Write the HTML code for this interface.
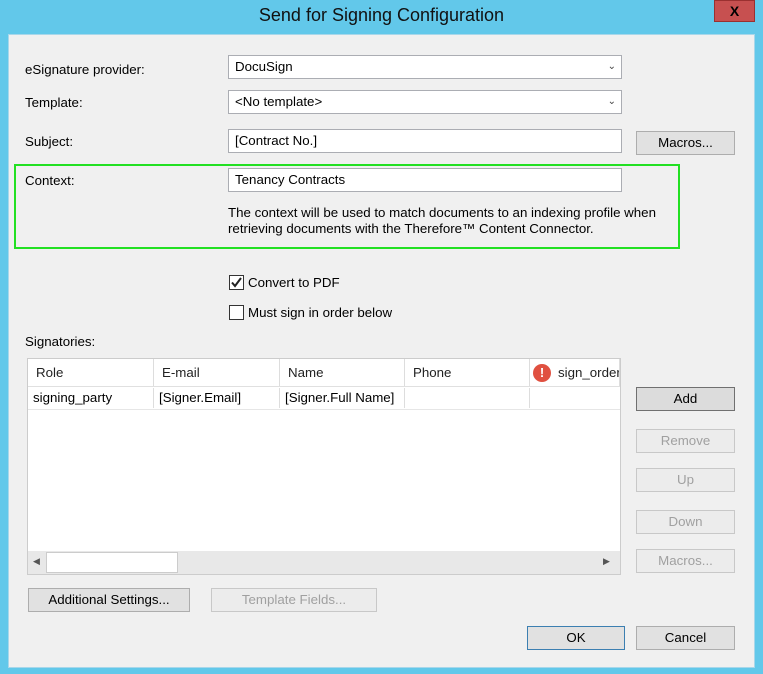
<!DOCTYPE html>
<html><head><style>
*{box-sizing:border-box;margin:0;padding:0}
body{width:763px;height:674px;background:#62c8ea;font-family:"Liberation Sans",sans-serif;font-size:13.3px;color:#000;position:relative;overflow:hidden}
.a{position:absolute}
.client{left:8px;top:34px;width:747px;height:634px;background:#f0f0f0;border:1px solid #a8d7ea}
.box{background:#fff;border:1px solid #abadb3;padding:0 6px;line-height:22px;height:24px}
.btn{background:#e1e1e1;border:1px solid #adadad;text-align:center;line-height:22px;height:24px}
.dis{color:#a0a0a0;background:#ececec;border-color:#c8c8c8}
.chk{width:15px;height:15px;border:1px solid #333;background:#fff}
.dd{position:absolute;right:5px;top:0;font-size:10px;color:#444}
.th{position:absolute;top:0;height:27px;line-height:27px;padding-left:8px;border-right:1px solid #ddd;color:#222;background:#fff;white-space:nowrap;overflow:hidden}
.td{position:absolute;top:29px;height:20px;line-height:20px;padding-left:5px;border-right:1px solid #ddd;white-space:nowrap}
</style></head><body>
<div class="a" style="left:0;top:5px;width:763px;text-align:center;font-size:18px;color:#111">Send for Signing Configuration</div>
<div class="a" style="left:714px;top:0;width:41px;height:22px;background:#c75050;border:1px solid #9a3030;color:#000;font-weight:bold;text-align:center;line-height:20px;font-size:14px">X</div>
<div class="a client"></div>

<div class="a" style="left:25px;top:62px">eSignature provider:</div>
<div class="a box" style="left:228px;top:55px;width:394px">DocuSign<span class="dd">&#8964;</span></div>
<div class="a" style="left:25px;top:95px">Template:</div>
<div class="a box" style="left:228px;top:90px;width:394px">&lt;No template&gt;<span class="dd">&#8964;</span></div>
<div class="a" style="left:25px;top:134px">Subject:</div>
<div class="a box" style="left:228px;top:129px;width:394px">[Contract No.]</div>
<div class="a btn" style="left:636px;top:131px;width:99px">Macros...</div>

<div class="a" style="left:14px;top:164px;width:666px;height:85px;border:2px solid #22e022"></div>
<div class="a" style="left:25px;top:173px">Context:</div>
<div class="a box" style="left:228px;top:168px;width:394px">Tenancy Contracts</div>
<div class="a" style="left:228px;top:205px;width:450px;line-height:16px">The context will be used to match documents to an indexing profile when retrieving documents with the Therefore™ Content Connector.</div>

<div class="a chk" style="left:229px;top:275px"><svg width="13" height="13" viewBox="0 0 13 13"><path d="M2 6.5 L5 10 L11 2" stroke="#222" stroke-width="2" fill="none"/></svg></div>
<div class="a" style="left:248px;top:275px">Convert to PDF</div>
<div class="a chk" style="left:229px;top:305px"></div>
<div class="a" style="left:248px;top:305px">Must sign in order below</div>

<div class="a" style="left:25px;top:334px">Signatories:</div>
<div class="a" style="left:27px;top:358px;width:594px;height:217px;background:#fff;border:1px solid #ccc">
 <div class="a" style="left:0;top:0;width:592px;height:28px;border-bottom:2px solid #e0e0e0"></div>
 <div class="th" style="left:0;width:126px">Role</div>
 <div class="th" style="left:126px;width:126px">E-mail</div>
 <div class="th" style="left:252px;width:125px">Name</div>
 <div class="th" style="left:377px;width:125px">Phone</div>
 <div class="th" style="left:502px;width:90px;padding-left:28px">sign_order</div>
 <div class="a" style="left:505px;top:5px;width:18px;height:18px;border-radius:50%;background:#e05040;color:#fff;font-weight:bold;text-align:center;line-height:18px;font-size:13px">!</div>
 <div class="td" style="left:0;width:126px">signing_party</div>
 <div class="td" style="left:126px;width:126px">[Signer.Email]</div>
 <div class="td" style="left:252px;width:125px">[Signer.Full Name]</div>
 <div class="td" style="left:377px;width:125px"></div>
 <div class="a" style="left:0;top:50px;width:592px;border-top:1px solid #e6e6e6"></div>
 <div class="a" style="left:0;top:192px;width:592px;height:23px;background:#e8e8e8"></div>
 <div class="a" style="left:18px;top:193px;width:132px;height:21px;background:#fff;border:1px solid #ccc"></div>
 <div class="a" style="left:5px;top:197px;font-size:9px;color:#555">&#9664;</div>
 <div class="a" style="left:575px;top:197px;font-size:9px;color:#555">&#9654;</div>
</div>

<div class="a btn" style="left:636px;top:387px;width:99px;background:#dcdcdc;border-color:#707070">Add</div>
<div class="a btn dis" style="left:636px;top:429px;width:99px">Remove</div>
<div class="a btn dis" style="left:636px;top:468px;width:99px">Up</div>
<div class="a btn dis" style="left:636px;top:510px;width:99px">Down</div>
<div class="a btn dis" style="left:636px;top:549px;width:99px">Macros...</div>

<div class="a btn" style="left:28px;top:588px;width:162px">Additional Settings...</div>
<div class="a btn dis" style="left:211px;top:588px;width:166px">Template Fields...</div>
<div class="a btn" style="left:527px;top:626px;width:98px;border-color:#3c7fb1">OK</div>
<div class="a btn" style="left:636px;top:626px;width:99px">Cancel</div>
</body></html>
